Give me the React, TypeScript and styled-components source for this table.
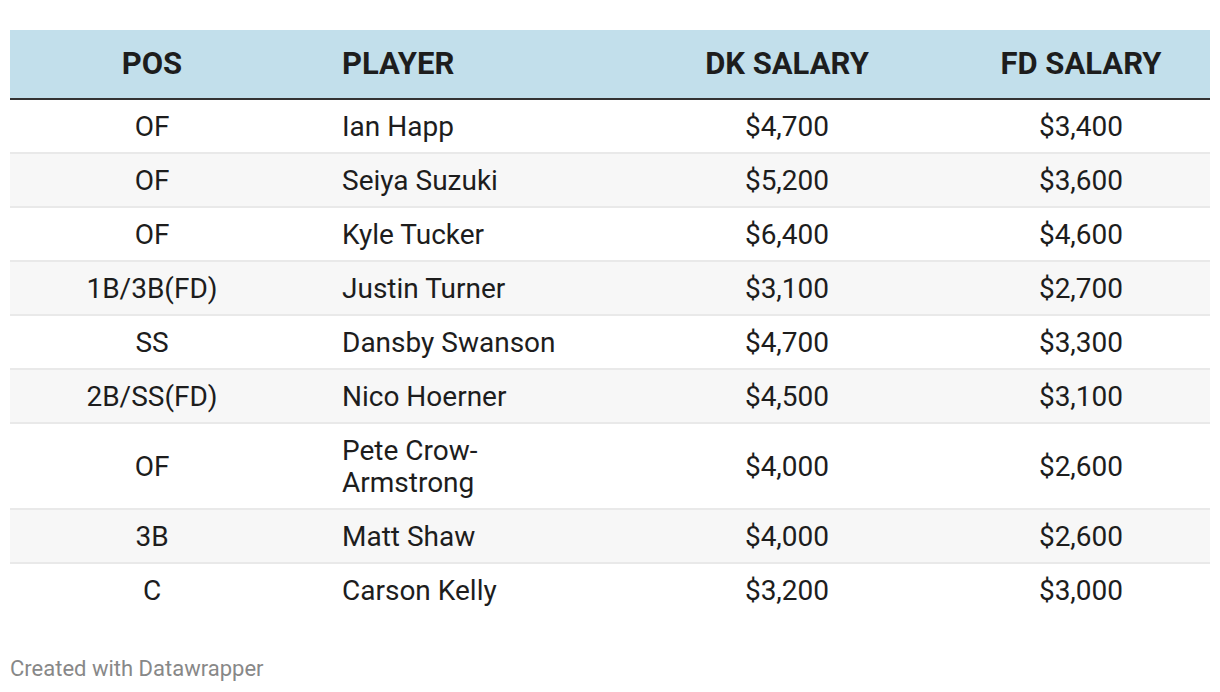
import React from "react";
import styled, { createGlobalStyle } from "styled-components";

const GlobalStyle = createGlobalStyle`
  html, body {
    margin: 0;
    padding: 0;
    background: #ffffff;
    font-family: Roboto, "Liberation Sans", sans-serif;
  }
`;

const Page = styled.div`
  padding: 30px 10px 0 10px;
`;

const Table = styled.div`
  display: grid;
  grid-template-columns: 284px 328px 330px 258px;
  width: 1200px;
`;

const HeaderRow = styled.div`
  display: contents;
`;

const HeaderCell = styled.div<{ $align?: "left" | "center" }>`
  height: 70px;
  box-sizing: border-box;
  display: flex;
  align-items: center;
  justify-content: ${({ $align }) => ($align === "left" ? "flex-start" : "center")};
  padding: ${({ $align }) => ($align === "left" ? "0 48px 2px" : "0 0 2px")};
  background: #c2dfeb;
  border-bottom: 2px solid #333333;
  font-size: 31px;
  font-weight: 700;
  color: #1d1d1d;
`;

const Cell = styled.div<{ $align?: "left" | "center"; $shaded: boolean; $last: boolean }>`
  display: flex;
  align-items: center;
  justify-content: ${({ $align }) => ($align === "left" ? "flex-start" : "center")};
  padding: ${({ $align }) => ($align === "left" ? "11px 48px 9px" : "11px 0 9px")};
  min-height: 32px;
  background: ${({ $shaded }) => ($shaded ? "#f7f7f7" : "#ffffff")};
  border-bottom: ${({ $last }) => ($last ? "none" : "2px solid #e9e9e9")};
  font-size: 28px;
  line-height: 32px;
  color: #1d1d1d;
`;

const Footer = styled.div`
  margin-top: 38px;
  font-size: 22px;
  line-height: 30px;
  color: #888888;
`;

type Player = { pos: string; name: string; dk: string; fd: string };

const players: Player[] = [
  { pos: "OF", name: "Ian Happ", dk: "$4,700", fd: "$3,400" },
  { pos: "OF", name: "Seiya Suzuki", dk: "$5,200", fd: "$3,600" },
  { pos: "OF", name: "Kyle Tucker", dk: "$6,400", fd: "$4,600" },
  { pos: "1B/3B(FD)", name: "Justin Turner", dk: "$3,100", fd: "$2,700" },
  { pos: "SS", name: "Dansby Swanson", dk: "$4,700", fd: "$3,300" },
  { pos: "2B/SS(FD)", name: "Nico Hoerner", dk: "$4,500", fd: "$3,100" },
  { pos: "OF", name: "Pete Crow-Armstrong", dk: "$4,000", fd: "$2,600" },
  { pos: "3B", name: "Matt Shaw", dk: "$4,000", fd: "$2,600" },
  { pos: "C", name: "Carson Kelly", dk: "$3,200", fd: "$3,000" },
];

export default function App() {
  return (
    <>
      <GlobalStyle />
      <Page>
        <Table>
          <HeaderRow>
            <HeaderCell>POS</HeaderCell>
            <HeaderCell $align="left">PLAYER</HeaderCell>
            <HeaderCell>DK SALARY</HeaderCell>
            <HeaderCell>FD SALARY</HeaderCell>
          </HeaderRow>
          {players.map((p, i) => {
            const shaded = i % 2 === 1;
            const last = i === players.length - 1;
            return (
              <React.Fragment key={p.name}>
                <Cell $shaded={shaded} $last={last}>{p.pos}</Cell>
                <Cell $align="left" $shaded={shaded} $last={last}>{p.name}</Cell>
                <Cell $shaded={shaded} $last={last}>{p.dk}</Cell>
                <Cell $shaded={shaded} $last={last}>{p.fd}</Cell>
              </React.Fragment>
            );
          })}
        </Table>
        <Footer>Created with Datawrapper</Footer>
      </Page>
    </>
  );
}
